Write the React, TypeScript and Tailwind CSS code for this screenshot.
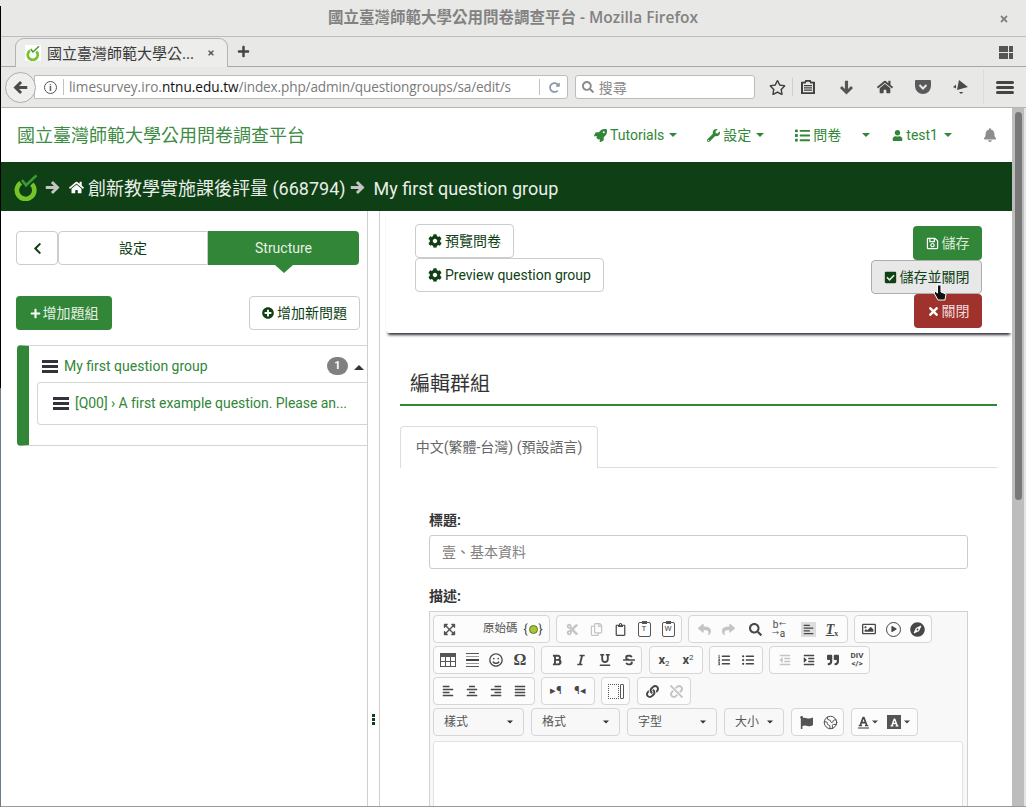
import type { ReactNode } from "react";
import {
  FaBell, FaBold, FaCheckSquare, FaChevronLeft, FaCog, FaCompass, FaCut, FaFlag,
  FaHome, FaItalic, FaList, FaListOl, FaListUl, FaLink, FaPlay, FaPlus, FaPlusCircle, FaQuoteRight, FaRedoAlt, FaRegImage, FaRegSave,
  FaRegSmile, FaRegStar, FaReply, FaSearch, FaShare, FaStrikethrough, FaTimes, FaUnderline, FaUnlink,
  FaUser, FaWrench, FaRocket, FaAlignLeft, FaAlignCenter, FaAlignRight, FaAlignJustify, FaExpandArrowsAlt, FaOutdent, FaIndent,
  FaRegCopy, FaRegClipboard, FaFont,
} from "react-icons/fa";
import { Earth } from "lucide-react";

const Caret = ({ className = "" }: { className?: string }) => (
  <span className={`inline-block w-0 h-0 border-x-[4px] border-x-transparent border-t-[4px] border-t-current ${className}`} />
);

// the old font-awesome arrow, heavier than the one in react-icons
const ThickArrow = ({ size, className = "" }: { size: number; className?: string }) => (
  <svg width={size} height={size} viewBox="0 0 16 16" className={className}>
    <path d="M8.500 1 15.500 8 8.500 15 6.300 12.800 9.500 9.700H.8V6.300h8.700L6.300 3.200z" fill="currentColor" />
  </svg>
);

const Lime = ({ size, bg = false }: { size: number; bg?: boolean }) => (
  <svg width={size} height={size} viewBox="0 0 24 24" className={bg ? "bg-white" : ""}>
    <path d="M8.500 6 12 10.500 21 2" fill="none" stroke={bg ? "#3f9a2d" : "#3c9a3a"} strokeWidth="2.200" />
    <path d="M7.500 8.500A7.500 7.500 0 1 0 17 9.500" fill="none" stroke="#74c42a" strokeWidth="4" />
  </svg>
);

const Hamburger = ({ className = "" }: { className?: string }) => (
  <span className={`flex flex-col justify-between w-[16px] h-[13px] ${className}`}>
    <span className="h-[3px] bg-[#33333b]" />
    <span className="h-[3px] bg-[#33333b]" />
    <span className="h-[3px] bg-[#33333b]" />
  </span>
);

function BrowserChrome() {
  return (
    <div className="shrink-0 bg-[#e8e8e7] text-[#4a4a4a] font-['Open_Sans','Noto_Sans_CJK_TC',sans-serif]">
      <div className="relative h-[37px] rounded-t-[6px] bg-[#e8e8e7] border-b border-[#bdbdbb] flex items-center justify-center text-[15.500px] font-semibold text-[#828282]">
        國立臺灣師範大學公用問卷調查平台 - Mozilla Firefox
        <FaTimes className="absolute right-[17px] top-[14px] text-[10px] text-[#7d7d7d]" />
      </div>
      <div className="h-[30px] flex items-end border-b border-[#a9a9a9] pl-[15px] pr-[13px]">
        <div className="h-[29px] w-[213px] -mb-px flex items-center pl-[9px] pr-[12px] bg-[#ededec] border border-b-0 border-[#b4b4b4] rounded-t-[9px] text-[15px]">
          <Lime size={16} bg />
          <span className="ml-[6px] text-[#3a3a3a] whitespace-nowrap">國立臺灣師範大學公...</span>
          <FaTimes className="ml-auto text-[8px] text-[#555]" />
        </div>
        <FaPlus className="ml-[9px] mb-[8px] text-[13px] text-[#444]" />
        <div className="ml-auto mb-[7px] grid grid-cols-[9px_4px] grid-rows-[6px_6px] gap-[1px]">
          <span className="bg-[#555]" /><span className="bg-[#555]" />
          <span className="bg-[#555]" /><span className="bg-[#555]" />
        </div>
      </div>
      <div className="h-[41px] flex items-center pl-[5px] pr-[12px] border-b border-[#b5b5b5]">
        <div className="relative z-10 w-[31px] h-[31px] rounded-full bg-[#efefee] border border-[#aeaeae] flex items-center justify-center">
          <ThickArrow size={15} className="rotate-180 text-[#4b4b4b]" />
        </div>
        <div className="-ml-[2px] w-[535px] h-[24px] bg-white border border-[#bcbcbc] rounded-r-[3px] flex items-center text-[14px] pl-[9px] pr-[7px]">
          <span className="w-[13px] h-[13px] rounded-full border border-[#555] flex items-center justify-center text-[9px] font-bold leading-none text-[#555]">i</span>
          <span className="ml-[6px] w-px h-[16px] bg-[#c2c2c2]" />
          <span className="ml-[5px] whitespace-nowrap text-[#7a7a7a] text-[13.600px]">
            limesurvey.iro.<span className="text-[#111]">ntnu.edu.tw</span><span className="tracking-[-0.14px]">/index.php/admin/questiongroups/sa/edit/s</span>
          </span>
          <span className="ml-auto w-px h-[16px] bg-[#c2c2c2]" />
          <FaRedoAlt className="ml-[9px] text-[11px] text-[#8a9aa8]" />
        </div>
        <div className="ml-[7px] w-[181px] h-[24px] bg-white border border-[#bcbcbc] rounded-[3px] flex items-center pl-[6px] text-[14px] text-[#8a8a8a]">
          <FaSearch className="text-[12px] text-[#8a8a8a] mr-[5px]" />搜尋
        </div>
        <FaRegStar className="ml-[14px] text-[17px] text-[#3f3f3f]" />
        <span className="ml-[6px] w-px h-[18px] bg-[#cfcfcf]" />
        <svg width="14" height="14" viewBox="0 0 14 16" preserveAspectRatio="none" className="ml-[8px]">
          <path d="M1 3h3l1-2h4l1 2h3v12H1z" fill="none" stroke="#3f3f3f" strokeWidth="2" />
          <path d="M3 6.500h8M3 9h8M3 11.500h8" stroke="#3f3f3f" strokeWidth="1.300" />
        </svg>
        <ThickArrow size={15} className="ml-[24px] rotate-90 text-[#555]" />
        <FaHome className="ml-[23px] text-[16px] text-[#4a4a4a]" />
        <svg width="16" height="14" viewBox="0 0 16 14" className="ml-[22px]">
          <path d="M1 0h14a1 1 0 0 1 1 1v5a8 8 0 0 1-16 0V1a1 1 0 0 1 1-1z" fill="#5a5a5a" />
          <path d="M4.500 5 8 8.500 11.500 5" fill="none" stroke="#e8e8e7" strokeWidth="2" />
        </svg>
        <svg width="16" height="16" viewBox="0 0 16 16" className="ml-[22px]">
          <path d="M6 1 15 8 4 11z" fill="#4a4a4a" />
          <path d="M3 5.500v4L0 8zM6 13h4.500L8 15z" fill="#4a4a4a" />
        </svg>
        <span className="ml-[14px] w-px h-[34px] bg-[#dcdcdc]" />
        <span className="ml-[12px] flex flex-col justify-between w-[18px] h-[13px]">
          <span className="h-[3px] rounded-full bg-[#444]" />
          <span className="h-[3px] rounded-full bg-[#444]" />
          <span className="h-[3px] rounded-full bg-[#444]" />
        </span>
      </div>
    </div>
  );
}

const NavItem = ({ icon, label, className = "" }: { icon: ReactNode; label: string; className?: string }) => (
  <span className={`flex items-center gap-[3px] ${className}`}>
    {icon}
    {label}
  </span>
);

function TopNav() {
  return (
    <div className="shrink-0 h-[54px] pl-[17px] flex items-center text-[#328637] bg-white">
      <span className="text-[18px] text-[#3d8c43]">國立臺灣師範大學公用問卷調查平台</span>
      <div className="ml-auto flex items-center text-[14px]">
        <NavItem icon={<FaRocket className="text-[13px]" />} label="Tutorials" />
        <Caret className="ml-[5px]" />
        <NavItem icon={<FaWrench className="text-[13px]" />} label="設定" className="ml-[30px]" />
        <Caret className="ml-[5px]" />
        <NavItem icon={<FaList className="text-[15px]" />} label="問卷" className="ml-[31px]" />
        <Caret className="ml-[21px]" />
        <NavItem icon={<FaUser className="text-[11px]" />} label="test1" className="ml-[22px]" />
        <Caret className="ml-[6px]" />
        <FaBell className="ml-[31px] mr-[15px] text-[14px] text-[#8d8d8d]" />
      </div>
    </div>
  );
}

function Breadcrumb() {
  return (
    <div className="shrink-0 h-[49px] bg-[#0f3f15] flex items-center pl-[12px] text-[#e8efe8] text-[18px]">
      <Lime size={28} />
      <ThickArrow size={15} className="ml-[5px] mt-[2px] text-[#c4c4c4]" />
      <FaHome className="ml-[9px] mt-[2px] text-[15px] text-white" />
      <span className="ml-[4px] mt-[3px]">創新教學實施課後評量 (668794)</span>
      <ThickArrow size={15} className="ml-[4px] mt-[2px] text-[#c4c4c4]" />
      <span className="ml-[9px] mt-[3px]">My first question group</span>
    </div>
  );
}

function Sidebar() {
  return (
    <div className="w-[368px] shrink-0 border-r border-[#cfcfcf] pl-[16px] pt-[20px] text-[14px]">
      <div className="flex h-[34px] w-[343px]">
        <button className="w-[42px] border border-[#ccc] rounded-[4px] flex items-center justify-center text-[#0f3f15]">
          <FaChevronLeft className="text-[13px]" />
        </button>
        <button className="w-[150px] border border-[#ccc] rounded-l-[4px] text-[#0f3f15]">設定</button>
        <button className="relative flex-1 bg-[#328637] rounded-r-[4px] text-[#e6f0e6]">
          Structure
          <span className="absolute left-1/2 -translate-x-1/2 top-full w-0 h-0 border-x-[9px] border-x-transparent border-t-[8px] border-t-[#328637]" />
        </button>
      </div>
      <div className="mt-[31px] flex justify-between w-[344px]">
        <button className="h-[34px] w-[96px] rounded-[4px] bg-[#328637] text-[#e6f0e6] flex items-center justify-center gap-[2px]">
          <FaPlus className="text-[11px] text-white" />增加題組
        </button>
        <button className="h-[34px] w-[111px] rounded-[4px] border border-[#ccc] text-[#0f3f15] flex items-center justify-center gap-[3px]">
          <FaPlusCircle className="text-[12px]" />增加新問題
        </button>
      </div>
      <div className="mt-[15px] ml-px h-[101px] border-y border-[#d5d5d5] rounded-l-[4px] border-l-[#328637] border-l-[12px] pl-[8px]">
        <div className="h-[36px] pt-[4px] flex items-center text-[#328637]">
          <Hamburger className="ml-[5px]" />
          <span className="ml-[6px]">My first question group</span>
          <span className="ml-auto w-[21px] h-[18px] rounded-full bg-[#808080] text-white text-[11px] font-bold flex items-center justify-center">1</span>
          <span className="ml-[6px] mr-[3px] mt-[2px] w-0 h-0 border-x-[5px] border-x-transparent border-b-[5px] border-b-[#33333b]" />
        </div>
        <div className="h-[43px] border-y border-l border-[#d5d5d5] rounded-l-[4px] flex items-center text-[#328637]">
          <Hamburger className="ml-[15px]" />
          <span className="ml-[6px] tracking-[-0.05px]">[Q00] › A first example question. Please an...</span>
        </div>
      </div>
    </div>
  );
}

const OutlineBtn = ({ children }: { children: ReactNode }) => (
  <button className="h-[34px] px-[12px] w-fit border border-[#ccc] rounded-[4px] text-[#0f3f15] flex items-center gap-[3px]">{children}</button>
);

const Group = ({ children, className = "" }: { children: ReactNode; className?: string }) => (
  <div className={`h-[28px] flex items-center border border-[#d6d6d6] rounded-[4px] bg-white/50 text-[#474747] ${className}`}>{children}</div>
);

const Tool = ({ children, faded = false, className = "" }: { children: ReactNode; faded?: boolean; className?: string }) => (
  <span className={`w-[24px] h-[24px] flex items-center justify-center text-[13px] ${faded ? "opacity-30" : ""} ${className}`}>{children}</span>
);

const Combo = ({ label, width }: { label: string; width: string }) => (
  <div className={`h-[28px] ${width} flex items-center border border-[#d6d6d6] rounded-[4px] pl-[10px] pr-[9px] text-[12px] text-[#555]`}>
    {label}
    <Caret className="ml-auto text-[#333] scale-75" />
  </div>
);

const PasteIcon = ({ letter }: { letter: string }) => (
  <span className="relative w-[13px] h-[15px] border border-[#555] rounded-[2px] flex items-center justify-center text-[8px] leading-none text-[#444]">
    {letter}
    <span className="absolute -top-[2px] left-[3px] w-[5px] h-[3px] bg-[#555]" />
  </span>
);

const TableIcon = () => (
  <svg width="16" height="14" viewBox="0 0 16 14">
    <rect x=".5" y=".5" width="15" height="13" fill="#fff" stroke="#555" />
    <rect x="0" y="0" width="16" height="4" fill="#555" />
    <path d="M5.500 4v9M10.500 4v9M0 8.500h16" stroke="#555" />
  </svg>
);

function Editor() {
  return (
    <div className="mt-[5px] w-[539px] h-[230px] border border-[#d1d1d1] bg-[#f8f8f8] pl-[3px] pt-[3px]">
      <div className="flex flex-col gap-[3px]">
        <div className="flex gap-[6px]">
          <Group className="w-[117px] pl-[3px]">
            <Tool><FaExpandArrowsAlt className="text-[#555]" /></Tool>
            <span className="ml-[22px] text-[11.500px] text-[#555] whitespace-nowrap">原始碼</span>
            <span className="ml-[6px] flex items-center gap-[1px] text-[12px] text-[#444]">
              {"{"}<span className="w-[9px] h-[9px] rounded-full bg-[#a8c53a] border border-[#5c7a1a]" />{"}"}
            </span>
          </Group>
          <Group className="w-[126px] pl-[3px]">
            <Tool faded><FaCut /></Tool>
            <Tool faded><FaRegCopy /></Tool>
            <Tool><FaRegClipboard /></Tool>
            <Tool><PasteIcon letter="T" /></Tool>
            <Tool><PasteIcon letter="W" /></Tool>
          </Group>
          <Group className="w-[160px] pl-[3px]">
            <Tool faded><FaReply /></Tool>
            <Tool faded><FaShare /></Tool>
            <Tool className="ml-[3px]"><FaSearch /></Tool>
            <Tool>
              <span className="grid grid-cols-2 text-[10px] leading-[9px] text-center">
                <span>b</span><span className="text-[7px]">←</span>
                <span className="text-[7px]">→</span><span>a</span>
              </span>
            </Tool>
            <Tool className="ml-[5px]"><span className="bg-[#ddd] p-[2px]"><FaAlignLeft className="text-[11px]" /></span></Tool>
            <Tool><span className="text-[14px] italic font-bold font-['Liberation_Serif',serif] underline">T<sub className="text-[8px] not-italic">x</sub></span></Tool>
          </Group>
          <Group className="w-[78px] pl-[2px]">
            <Tool><FaRegImage className="text-[14px]" /></Tool>
            <Tool><span className="w-[15px] h-[15px] rounded-full border-[1.500px] border-[#444] flex items-center justify-center"><FaPlay className="text-[6px] ml-px" /></span></Tool>
            <Tool><FaCompass className="text-[15px]" /></Tool>
          </Group>
        </div>
        <div className="flex gap-[6px]">
          <Group className="w-[102px] pl-[2px]">
            <Tool><TableIcon /></Tool>
            <Tool><span className="flex flex-col gap-[2px] w-[13px]"><i className="h-px bg-[#555]" /><i className="h-px bg-[#999]" /><i className="h-[2px] bg-[#444]" /><i className="h-px bg-[#999]" /><i className="h-px bg-[#555]" /></span></Tool>
            <Tool><FaRegSmile className="text-[14px]" /></Tool>
            <Tool><span className="text-[16px] font-['Liberation_Serif',serif] font-bold">Ω</span></Tool>
          </Group>
          <Group className="w-[101px] pl-[3px]">
            <Tool><FaBold className="text-[12px]" /></Tool>
            <Tool><FaItalic className="text-[12px]" /></Tool>
            <Tool><FaUnderline className="text-[12px]" /></Tool>
            <Tool><FaStrikethrough className="text-[12px]" /></Tool>
          </Group>
          <Group className="w-[54px] ml-px pl-[2px]">
            <Tool><span className="text-[13px] font-bold">x<sub className="text-[8px] font-normal">2</sub></span></Tool>
            <Tool><span className="text-[13px] font-bold">x<sup className="text-[8px] font-normal">2</sup></span></Tool>
          </Group>
          <Group className="w-[54px] pl-[2px]">
            <Tool><FaListOl className="text-[12px]" /></Tool>
            <Tool><FaListUl className="text-[12px]" /></Tool>
          </Group>
          <Group className="w-[101px] pl-[3px]">
            <Tool faded><FaOutdent className="text-[12px]" /></Tool>
            <Tool><FaIndent className="text-[12px]" /></Tool>
            <Tool><FaQuoteRight className="text-[12px]" /></Tool>
            <Tool><span className="text-[8px] leading-[8px] text-center font-bold">DIV<br />{"</>"}</span></Tool>
          </Group>
        </div>
        <div className="flex gap-[6px]">
          <Group className="w-[102px] pl-[2px]">
            <Tool><FaAlignLeft className="text-[12px]" /></Tool>
            <Tool><FaAlignCenter className="text-[12px]" /></Tool>
            <Tool><FaAlignRight className="text-[12px]" /></Tool>
            <Tool><FaAlignJustify className="text-[12px]" /></Tool>
          </Group>
          <Group className="w-[54px] pl-[2px] text-[11px]">
            <Tool><span className="text-[11px]">▸¶</span></Tool>
            <Tool><span className="text-[11px]">¶◂</span></Tool>
          </Group>
          <Group className="w-[29px] justify-center">
            <span className="flex gap-[1px] items-stretch h-[15px]">
              <span className="w-[11px] border border-dotted border-[#555]" />
              <span className="w-[4px] border border-[#555] rounded-[1px]" />
            </span>
          </Group>
          <Group className="w-[54px] ml-px pl-[2px]">
            <Tool><FaLink className="text-[13px]" /></Tool>
            <Tool faded><FaUnlink className="text-[13px]" /></Tool>
          </Group>
        </div>
        <div className="flex gap-[7px]">
          <Combo label="樣式" width="w-[91px]" />
          <Combo label="格式" width="w-[89px]" />
          <Combo label="字型" width="w-[90px]" />
          <Combo label="大小" width="w-[60px]" />
          <Group className="w-[53px] pl-[2px]">
            <Tool><FaFlag className="text-[13px] text-[#555]" /></Tool>
            <Tool><Earth size={15} strokeWidth={1.500} /></Tool>
          </Group>
          <Group className="w-[67px] pl-[6px] gap-[2px]">
            <span className="border-b-2 border-[#999] leading-[12px]"><FaFont className="text-[11px]" /></span>
            <Caret className="scale-75" />
            <span className="ml-[6px] w-[14px] h-[14px] bg-[#555] text-white flex items-center justify-center"><FaFont className="text-[9px]" /></span>
            <Caret className="scale-75" />
          </Group>
        </div>
      </div>
      <div className="mt-[5px] w-[530px] h-[80px] bg-white border border-[#e2e2e2] rounded-t-[3px]" />
    </div>
  );
}

function MainPanel() {
  return (
    <div className="relative flex-1 min-w-0 overflow-hidden">
      <div className="ml-[6px] h-[122px] pl-[29px] pr-[30px] pt-[13px] flex justify-between rounded-bl-[3px] shadow-[0_4px_3px_-2px_#2f2f38] text-[14px] bg-white">
        <div className="flex flex-col">
          <OutlineBtn><FaCog className="text-[14px]" />預覽問卷</OutlineBtn>
          <OutlineBtn><FaCog className="text-[14px]" />Preview question group</OutlineBtn>
        </div>
        <div className="mt-[2px] flex flex-col items-end relative">
          <button className="h-[34px] w-[69px] rounded-[4px] bg-[#328637] text-[#dcebdc] flex items-center justify-center gap-[3px]">
            <FaRegSave className="text-[13px] text-white" />儲存
          </button>
          <button className="h-[34px] w-[111px] rounded-[4px] border border-[#adadad] bg-[#e8e8e8] text-[#0f3f15] flex items-center justify-center gap-[3px]">
            <FaCheckSquare className="text-[13px]" />儲存並關閉
          </button>
          <button className="h-[34px] w-[68px] rounded-[4px] bg-[#a0322e] text-[#eedcdc] flex items-center justify-center gap-[2px]">
            <FaTimes className="text-[13px] text-white" />關閉
          </button>
          <svg width="14" height="17" viewBox="0 0 14 17" className="absolute left-[62px] top-[58px]">
            <path d="M4.500 1v8L2.500 7.500 1 9l4 7h7l1-6-5-2V1z" fill="#111" stroke="#fff" strokeWidth="1" />
          </svg>
        </div>
      </div>
      <div className="pl-[20px] pr-[15px]">
        <h1 className="mt-[36px] pl-[10px] pb-[5px] text-[20px] leading-[30px] text-[#333] border-b-2 border-[#328637]">編輯群組</h1>
        <div className="mt-[20px] border-b border-[#ddd] h-[42px]">
          <div className="w-[198px] h-[42px] border border-b-0 border-[#ddd] rounded-t-[4px] bg-white flex items-center justify-center text-[14px] text-[#666]">
            中文(繁體-台灣) (預設語言)
          </div>
        </div>
        <div className="pl-[29px] text-[14px]">
          <div className="mt-[42px] h-[20px] leading-[20px] font-bold text-[#333]">標題:</div>
          <div className="mt-[5px] w-[539px] h-[34px] border border-[#ccc] rounded-[3px] flex items-center px-[12px] text-[#808080]">壹、基本資料</div>
          <div className="mt-[17px] h-[20px] leading-[20px] font-bold text-[#333]">描述:</div>
          <Editor />
        </div>
      </div>
    </div>
  );
}

export default function App() {
  return (
    <div className="relative w-[1026px] h-[807px] overflow-hidden bg-[#1c1c1c] flex flex-col font-['Roboto','Noto_Sans_CJK_TC',sans-serif]">
      <BrowserChrome />
      <div className="flex-1 min-h-0 flex bg-white border-b border-[#9a9a9a]">
        <div className="flex-1 min-w-0 flex flex-col">
          <TopNav />
          <Breadcrumb />
          <div className="flex-1 min-h-0 flex">
            <Sidebar />
            <div className="w-[12px] shrink-0 border-r border-[#cfcfcf] flex flex-col items-center justify-center gap-[1px] pt-[422px]">
              <span className="w-[3px] h-[3px] bg-[#0f3f15]" />
              <span className="w-[3px] h-[3px] bg-[#0f3f15]" />
              <span className="w-[3px] h-[3px] bg-[#0f3f15]" />
            </div>
            <MainPanel />
          </div>
        </div>
        <div className="w-[14px] shrink-0 flex bg-[#e4e4e4]">
          <div className="w-[12px] bg-[#bdbdbd] pl-[3px] pt-[4px]">
            <div className="h-[388px] w-[7px] rounded-full bg-[#787878]" />
          </div>
        </div>
      </div>
      <span className="absolute left-0 top-[6px] w-px h-[382px] bg-black" />
      <span className="absolute left-0 top-[388px] w-px h-[419px] bg-[#6b7b8c]" />
    </div>
  );
}
